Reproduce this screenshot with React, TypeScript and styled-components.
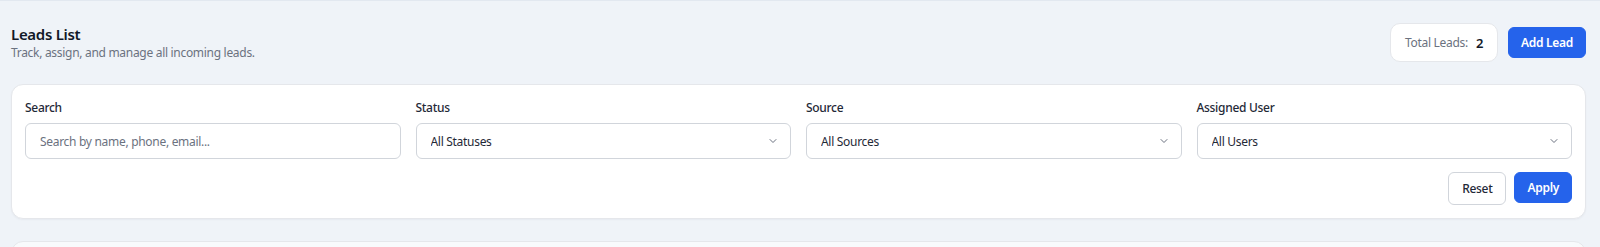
import React, { useState } from "react";
import styled, { createGlobalStyle } from "styled-components";

const GlobalStyle = createGlobalStyle`
  html, body {
    margin: 0;
    padding: 0;
    background: #eff3f8;
    font-family: "Noto Sans", "Open Sans", Arial, sans-serif;
    letter-spacing: -0.3px;
    color: #1f2937;
  }
  * { box-sizing: border-box; }
  button, input, select { letter-spacing: inherit; }
`;

const Page = styled.div`
  border-top: 1px solid #e2e8f0;
  padding: 0 14px 0 11px;
  min-height: 247px;
`;

const Header = styled.div`
  display: flex;
  align-items: center;
  justify-content: space-between;
  padding: 22px 0 22px;
`;

const Title = styled.h1`
  margin: 0;
  font-size: 15px;
  line-height: 20px;
  font-weight: 600;
  color: #111827;
`;

const Subtitle = styled.p`
  margin: 1px 0 0;
  font-size: 12px;
  line-height: 16px;
  color: #6b7280;
`;

const Actions = styled.div`
  display: flex;
  align-items: center;
  gap: 10px;
`;

const CountBox = styled.div`
  display: flex;
  align-items: center;
  gap: 8px;
  height: 39px;
  padding: 0 14px;
  background: #fff;
  border: 1px solid #e5e7eb;
  border-radius: 10px;
  font-size: 12px;
  color: #6b7280;
`;

const Count = styled.span`
  font-size: 13px;
  font-weight: 600;
  color: #111827;
`;

const Button = styled.button<{ $variant?: "primary" | "ghost" }>`
  height: ${(p) => (p.$variant === "ghost" ? "33px" : "31px")};
  padding: 0 ${(p) => (p.$variant === "ghost" ? "13px" : "12px")};
  border-radius: 6px;
  font-family: inherit;
  font-size: 12px;
  font-weight: ${(p) => (p.$variant === "ghost" ? 500 : 600)};
  cursor: pointer;
  border: 1px solid ${(p) => (p.$variant === "ghost" ? "#d1d5db" : "#2563eb")};
  background: ${(p) => (p.$variant === "ghost" ? "#fff" : "#2563eb")};
  color: ${(p) => (p.$variant === "ghost" ? "#1f2937" : "#fff")};
`;

const Card = styled.div`
  background: #fff;
  border: 1px solid #e5e7eb;
  border-radius: 12px;
  padding: 13px;
  box-shadow: 0 1px 2px rgba(15, 23, 42, 0.04);
`;

const FilterGrid = styled.div`
  display: grid;
  grid-template-columns: repeat(4, 1fr);
  column-gap: 15px;
`;

const Field = styled.div`
  display: flex;
  flex-direction: column;
`;

const Label = styled.label`
  font-size: 12px;
  line-height: 18px;
  font-weight: 500;
  color: #1f2937;
  margin: 1px 0 6px;
`;

const Input = styled.input`
  height: 36px;
  width: 100%;
  padding: 0 14px;
  border: 1px solid #d1d5db;
  border-radius: 6px;
  font-family: inherit;
  font-size: 12px;
  color: #1f2937;
  outline: none;
  &::placeholder { color: #6b7280; }
`;

const SelectWrap = styled.div`
  position: relative;
`;

const Select = styled.select`
  appearance: none;
  height: 36px;
  width: 100%;
  padding: 0 34px 0 14px;
  border: 1px solid #d1d5db;
  border-radius: 6px;
  background: #fff;
  font-family: inherit;
  font-size: 12px;
  color: #1f2937;
  outline: none;
`;

const Chevron = styled.svg`
  position: absolute;
  right: 12px;
  top: 50%;
  transform: translateY(-50%);
  pointer-events: none;
`;

const ButtonRow = styled.div`
  display: flex;
  justify-content: flex-end;
  gap: 8px;
  margin-top: 13px;
`;

const NextCard = styled.div`
  margin-top: 22px;
  height: 40px;
  background: #f8fafc;
  border: 1px solid #e5e7eb;
  border-radius: 12px;
`;

const DropDown = ({ value, options }: { value: string; options: string[] }) => {
  const [v, setV] = useState(value);
  return (
    <SelectWrap>
      <Select value={v} onChange={(e) => setV(e.target.value)}>
        {options.map((o) => (
          <option key={o}>{o}</option>
        ))}
      </Select>
      <Chevron width="12" height="12" viewBox="0 0 24 24" fill="none" stroke="#6b7280" strokeWidth="2" strokeLinecap="round" strokeLinejoin="round">
        <path d="m6 9 6 6 6-6" />
      </Chevron>
    </SelectWrap>
  );
};

const App = () => {
  const [search, setSearch] = useState("");
  return (
    <Page>
      <GlobalStyle />
      <Header>
        <div>
          <Title>Leads List</Title>
          <Subtitle>Track, assign, and manage all incoming leads.</Subtitle>
        </div>
        <Actions>
          <CountBox>
            Total Leads: <Count>2</Count>
          </CountBox>
          <Button>Add Lead</Button>
        </Actions>
      </Header>

      <Card>
        <FilterGrid>
          <Field>
            <Label>Search</Label>
            <Input
              placeholder="Search by name, phone, email..."
              value={search}
              onChange={(e) => setSearch(e.target.value)}
            />
          </Field>
          <Field>
            <Label>Status</Label>
            <DropDown value="All Statuses" options={["All Statuses", "New", "Contacted", "Qualified", "Lost"]} />
          </Field>
          <Field>
            <Label>Source</Label>
            <DropDown value="All Sources" options={["All Sources", "Website", "Referral", "Ads"]} />
          </Field>
          <Field>
            <Label>Assigned User</Label>
            <DropDown value="All Users" options={["All Users"]} />
          </Field>
        </FilterGrid>
        <ButtonRow>
          <Button $variant="ghost" onClick={() => setSearch("")}>Reset</Button>
          <Button>Apply</Button>
        </ButtonRow>
      </Card>

      <NextCard />
    </Page>
  );
};

export default App;
